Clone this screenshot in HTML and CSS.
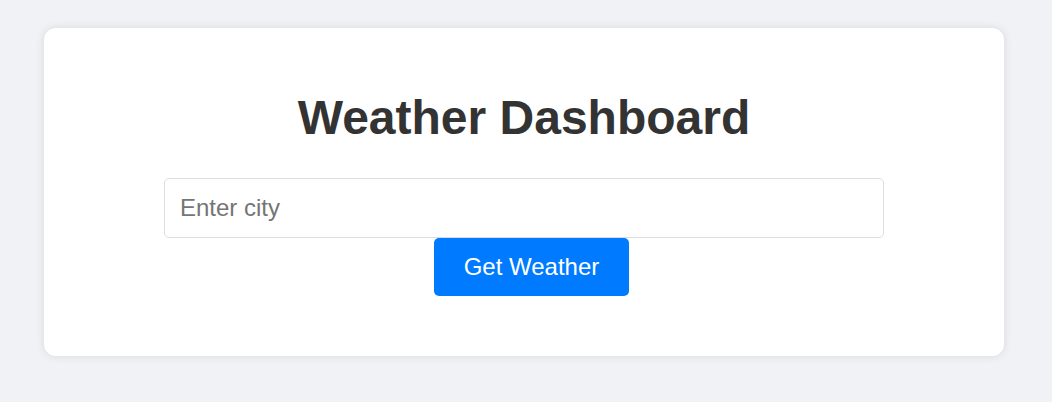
FILE: index.html
```html
<!DOCTYPE html>
<html>
<head>
<meta charset="utf-8">
<title>Weather Dashboard</title>
<link rel="stylesheet" href="styles.css">
</head>
<body>
<div class="card">
  <h1 class="title">Weather Dashboard</h1>
  <div class="form">
    <input class="city" type="text" placeholder="Enter city">
    <button class="btn">Get Weather</button>
  </div>
</div>
</body>
</html>
```
FILE: styles.css
```css
html, body {
  margin: 0;
  padding: 0;
}
body {
  background: #f0f2f5;
  font-family: "Liberation Sans", Arial, sans-serif;
  padding: 28px 0 0 44px;
  height: 402px;
  box-sizing: border-box;
}
.card {
  width: 960px;
  height: 328px;
  box-sizing: border-box;
  background: #fff;
  border-radius: 12px;
  box-shadow: 0 0 10px rgba(0, 0, 0, 0.1);
  padding-top: 62px;
  display: flex;
  flex-direction: column;
  align-items: center;
}
.title {
  margin: 0 0 33px;
  font-size: 48px;
  line-height: 55px;
  font-weight: bold;
  color: #333;
}
.form {
  display: flex;
  flex-direction: column;
  align-items: center;
}
.city {
  width: 720px;
  height: 60px;
  box-sizing: border-box;
  border: 1px solid #ddd;
  border-radius: 5px;
  padding: 0 15px;
  font-family: "Liberation Sans", Arial, sans-serif;
  font-size: 24px;
  color: #333;
  outline: none;
}
.city::placeholder {
  color: #757575;
}
.btn {
  margin-left: 15px;
  width: 195px;
  height: 58px;
  border: none;
  border-radius: 5px;
  background: #007bff;
  color: #fff;
  font-family: "Liberation Sans", Arial, sans-serif;
  font-size: 24px;
  padding: 0;
  cursor: pointer;
}
```
